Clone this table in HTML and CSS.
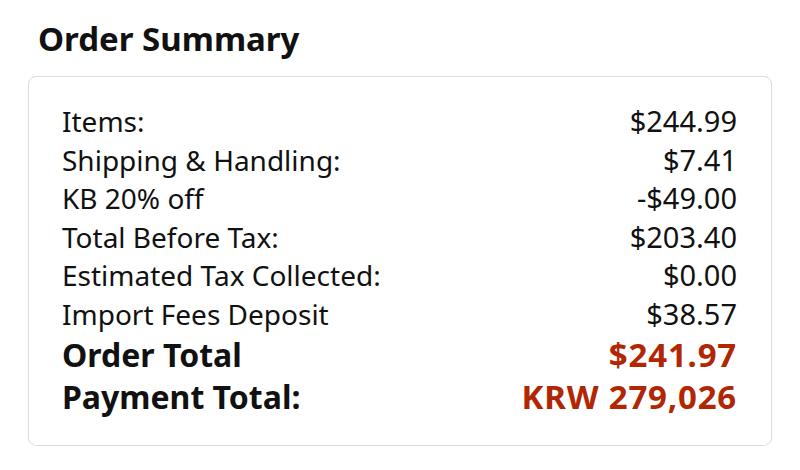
FILE: index.html
```html
<!DOCTYPE html>
<html lang="en">
<head>
    <meta charset="UTF-8">
    <meta name="viewport" content="width=device-width, initial-scale=1.0">
    <title>Order Summary</title>
    <link rel="stylesheet" href="styles.css">
</head>
<body>
<div class="page">
    <h2 class="title">Order Summary</h2>
    <div class="box">
        <div class="row"><span>Items:</span><span class="val">$244.99</span></div>
        <div class="row"><span>Shipping &amp; Handling:</span><span class="val">$7.41</span></div>
        <div class="row"><span>KB 20% off</span><span class="val">-$49.00</span></div>
        <div class="row"><span>Total Before Tax:</span><span class="val">$203.40</span></div>
        <div class="row"><span>Estimated Tax Collected:</span><span class="val">$0.00</span></div>
        <div class="row"><span>Import Fees Deposit</span><span class="val">$38.57</span></div>
        <div class="row total"><span>Order Total</span><span class="price">$241.97</span></div>
        <div class="row total"><span>Payment Total:</span><span class="price">KRW 279,026</span></div>
    </div>
</div>
</body>
</html>
```

FILE: styles.css
```css
html, body {
    margin: 0;
    background: #fff;
    color: #111;
    font-family: "Noto Sans", "Open Sans", sans-serif;
}

.page {
    padding: 14px 28px 0 28px;
}

.title {
    margin: 0 0 12px 10px;
    font-size: 33px;
    font-weight: 700;
    line-height: 50px;
}

.box {
    border: 1.5px solid #ddd;
    border-radius: 8px;
    padding: 25px 34px 27px 33px;
}

.row {
    display: flex;
    justify-content: space-between;
    align-items: baseline;
    font-size: 28px;
    line-height: 38.6px;
}

.val {
    font-size: 29px;
}

.total {
    font-size: 32px;
    font-weight: 700;
    line-height: 42px;
}

.price {
    font-size: 33px;
    letter-spacing: 0.8px;
    color: #b12704;
}
```
